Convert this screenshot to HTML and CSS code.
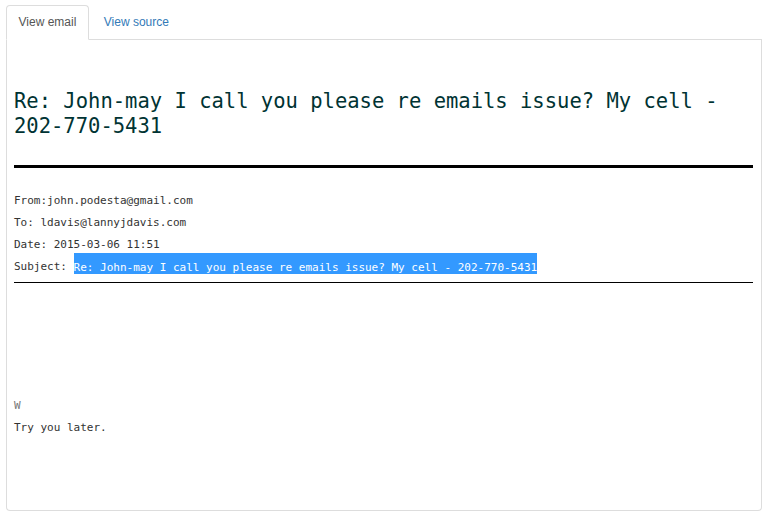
FILE: index.html
```html
<!DOCTYPE html>
<html lang="en">
<head>
<meta charset="utf-8">
<title>View email</title>
<link rel="stylesheet" href="styles.css">
</head>
<body>
<div class="wrap">
  <ul class="tabs">
    <li class="tab active"><a href="#">View email</a></li>
    <li class="tab"><a href="#">View source</a></li>
  </ul>
  <div class="panel">
    <h2 class="subject-title">Re: John-may I call you please re emails issue? My cell - 202-770-5431</h2>
    <hr class="rule-thick">
    <div class="headers">
      <div>From:john.podesta@gmail.com</div>
      <div>To: ldavis@lannyjdavis.com</div>
      <div>Date: 2015-03-06 11:51</div>
      <div>Subject: <span class="hl">Re: John-may I call you please re emails issue? My cell - 202-770-5431</span></div>
    </div>
    <hr class="rule-thin">
    <div class="body-text">
      <div class="faint">W</div>
      <div>Try you later.</div>
    </div>
  </div>
</div>
</body>
</html>
```
FILE: styles.css
```css
html, body {
  margin: 0;
  padding: 0;
  background: #fff;
}
.wrap {
  padding: 5px 10px 0 6px;
  font-family: "Liberation Sans", Arial, sans-serif;
}
.tabs {
  list-style: none;
  margin: 0;
  padding: 0;
  display: flex;
  border-bottom: 1px solid #ddd;
}
.tab {
  margin: 0 2px -1px 0;
}
.tab a {
  display: block;
  padding: 8px 12px 8px 11.5px;
  font-size: 12px;
  line-height: 17px;
  color: #337ab7;
  text-decoration: none;
  border: 1px solid transparent;
  border-radius: 4px 4px 0 0;
}
.tab.active a {
  color: #555;
  background: #fff;
  border-color: #ddd #ddd transparent #ddd;
}
.panel {
  border: 1px solid #ddd;
  border-top: none;
  border-radius: 0 0 4px 4px;
  height: 471px;
  box-sizing: border-box;
  padding: 49px 8px 0 7px;
}
.subject-title {
  margin: 0;
  font-family: "DejaVu Sans Mono", "Liberation Mono", monospace;
  font-weight: normal;
  font-size: 20.5px;
  line-height: 25px;
  color: #033;
}
.rule-thick {
  margin: 26px 0 0;
  border: none;
  border-top: 3px solid #000;
  height: 0;
}
.headers {
  margin-top: 22px;
  font-family: "DejaVu Sans Mono", "Liberation Mono", monospace;
  font-size: 11px;
  line-height: 22px;
  color: #333;
}
.hl {
  background: #3399ff;
  color: #fff;
  padding: 7.5px 0 0.5px;
}
.rule-thin {
  margin: 4px 0 0;
  border: none;
  border-top: 1px solid #000;
  height: 0;
}
.body-text {
  margin-top: 111.5px;
  font-family: "DejaVu Sans Mono", "Liberation Mono", monospace;
  font-size: 11px;
  line-height: 22px;
  color: #333;
}
.faint {
  color: #777;
}
```
